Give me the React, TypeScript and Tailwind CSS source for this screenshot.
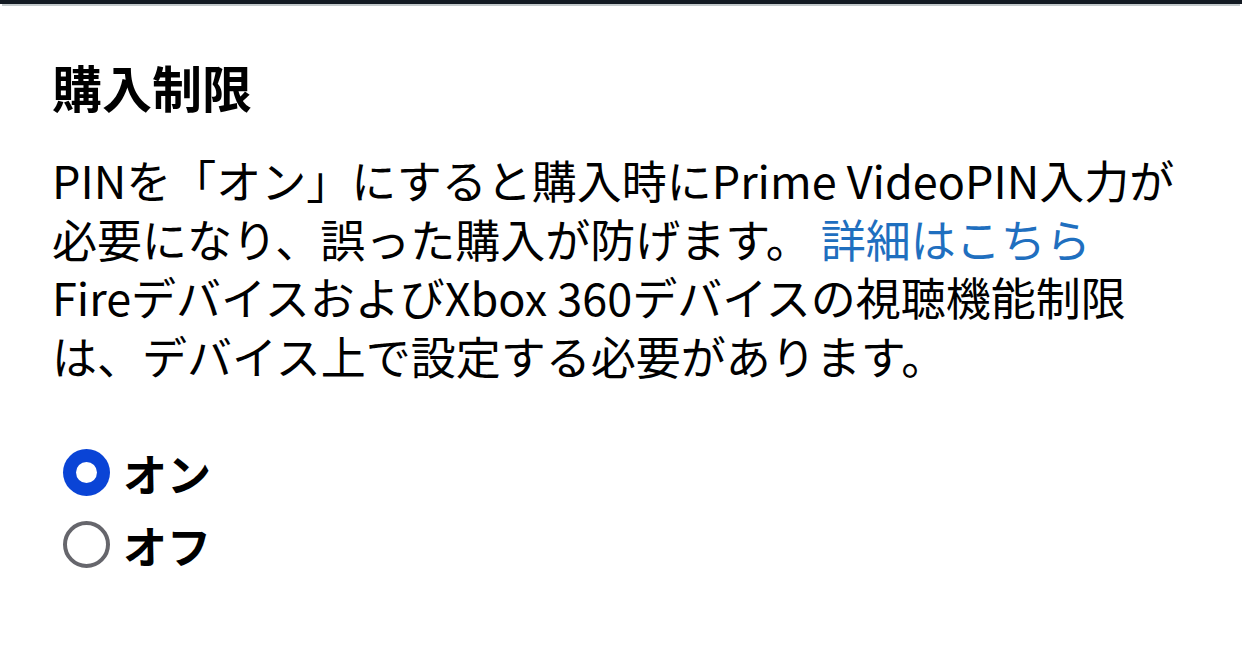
import { useState } from 'react';

const font = { fontFamily: '"Noto Sans CJK JP", "Noto Sans", sans-serif' };

function Radio({ checked, label, onClick }: { checked: boolean; label: string; onClick: () => void }) {
  return (
    <button type="button" onClick={onClick} className="flex h-[72px] items-center gap-[13px] text-left">
      {checked ? (
        <span className="flex h-[47px] w-[47px] items-center justify-center rounded-full bg-[#0a44d6]">
          <span className="h-[21px] w-[21px] rounded-full bg-white" />
        </span>
      ) : (
        <span className="h-[47px] w-[47px] rounded-full border-[4px] border-[#66666c] bg-white" />
      )}
      <span className="text-[44px] font-bold leading-[72px] text-black">{label}</span>
    </button>
  );
}

export default function App() {
  const [pin, setPin] = useState<'on' | 'off'>('on');

  return (
    <div className="h-[646px] w-[1242px] overflow-hidden bg-white" style={font}>
      <div className="h-[4px] bg-[#131a22]" />
      <div className="mx-[2px] h-[2px] bg-[#c3c9cb]" />

      <div className="pl-[52px] pt-[50px]">
        <h1 className="text-[50px] font-bold leading-[60px] text-black">購入制限</h1>

        <p className="mt-[35px] whitespace-nowrap text-[45px] leading-[58.7px] text-black">
          PINを「オン」にすると購入時にPrime VideoPIN入力が
          <br />
          必要になり、誤った購入が防げます。{' '}
          <a href="#" className="text-[#1f6fbf]">
            詳細はこちら
          </a>
          <br />
          FireデバイスおよびXbox 360デバイスの視聴機能制限
          <br />
          は、デバイス上で設定する必要があります。
        </p>

        <div className="mt-[51px] flex flex-col pl-[11px]">
          <Radio checked={pin === 'on'} label="オン" onClick={() => setPin('on')} />
          <Radio checked={pin === 'off'} label="オフ" onClick={() => setPin('off')} />
        </div>
      </div>
    </div>
  );
}
